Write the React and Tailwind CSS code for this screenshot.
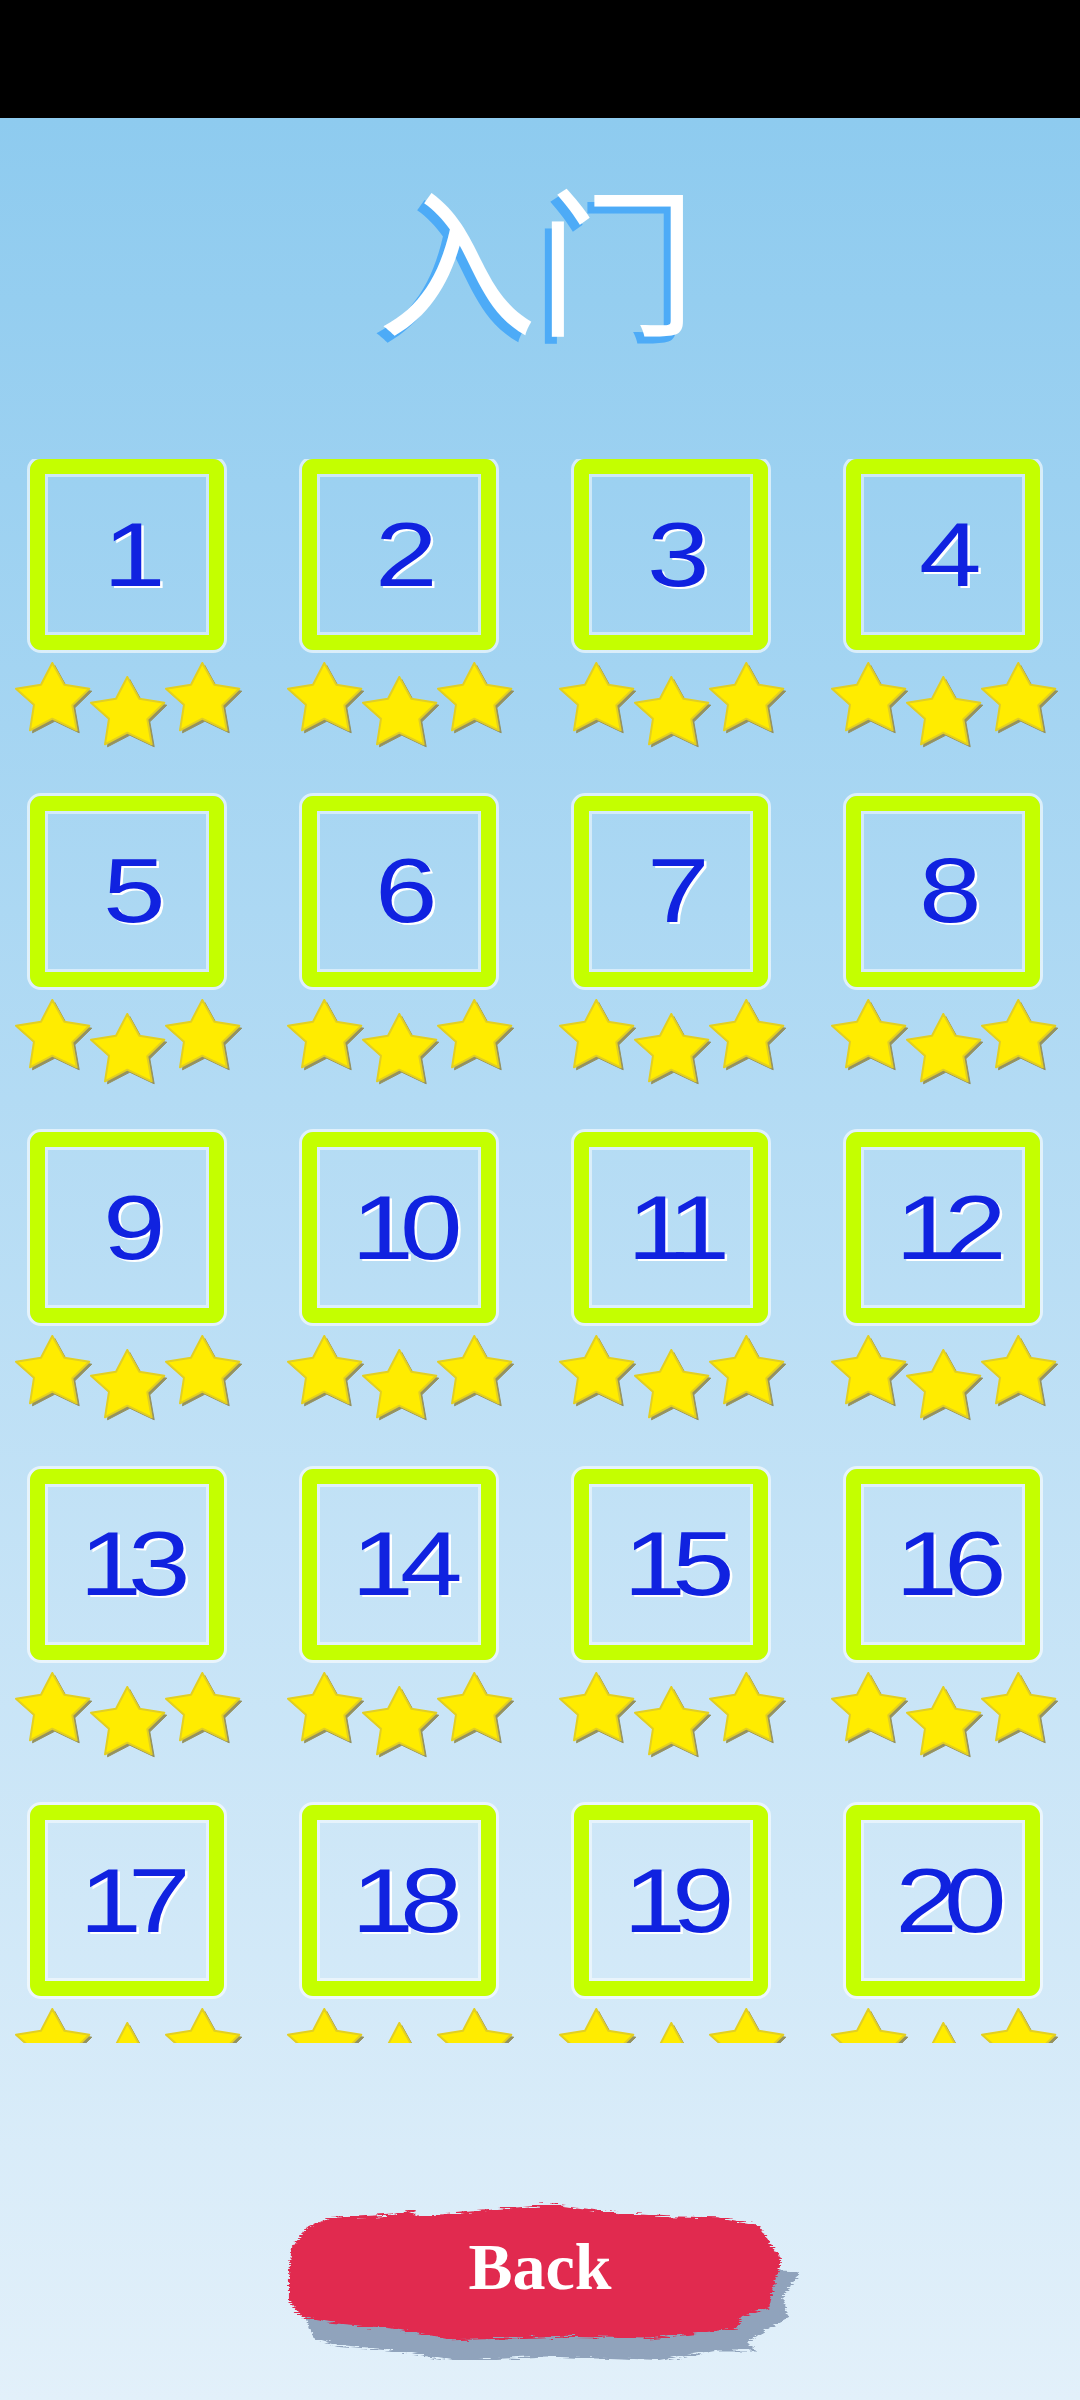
const levels = Array.from({ length: 20 }, (_, i) => i + 1);

function Star({ lower }) {
  const pts = "37.3,1 49.3,22.7 74.3,26.7 57.3,43.3 61.7,68.3 37.3,56.7 15,68.3 19,42.7 1,26.7 26,22.7";
  return (
    <svg viewBox="0 0 80 76" className={`w-[80px] h-[76px] shrink-0 -mx-[2.5px] ${lower ? "mt-[14px]" : ""}`}>
      <polygon points={pts} transform="translate(2.5 2.5)" fill="#95925f" stroke="#95925f" strokeWidth="1" />
      <polygon points={pts} fill="#ffec00" stroke="#e2cf22" strokeWidth="2" strokeLinejoin="round" />
    </svg>
  );
}

function Level({ n }) {
  return (
    <div className="w-[200px] h-[336.5px] flex flex-col">
      <div className="h-[197px] border-[3px] border-white/60 rounded-[14px]">
        <div className="h-full border-[15px] border-[#c4ff00] rounded-[11px]">
          <div className="h-full border-[3px] border-white/50 flex items-center justify-center pl-[2px]">
            <span
              className="inline-block scale-x-[1.25] text-[90px] leading-none tracking-[-11px] text-[#1022e0] [text-shadow:2px_2px_0_#ffffff]"
              style={{ fontFamily: '"Liberation Sans", Arial, sans-serif' }}
            >
              {n}
            </span>
          </div>
        </div>
      </div>
      <div className="flex justify-center mt-[9px] pl-[5px]">
        <Star />
        <Star lower />
        <Star />
      </div>
    </div>
  );
}

function Brush() {
  return (
    <svg viewBox="0 0 1568 522" className="absolute inset-0 w-full h-full">
      <defs>
        <filter id="rough" x="-5%" y="-10%" width="110%" height="120%">
          <feTurbulence type="fractalNoise" baseFrequency="0.02 0.22" numOctaves="3" seed="4" result="n" />
          <feDisplacementMap in="SourceGraphic" in2="n" scale="24" xChannelSelector="R" yChannelSelector="G" />
        </filter>
      </defs>
      <g filter="url(#rough)">
        <polygon
          fill="#90a3bc"
          points="105,400 125,460 200,482 400,500 550,525 800,512 1130,525 1300,495 1410,495 1385,470 1450,430 1505,400 1490,340 1540,265 1440,260 1360,300 1000,400"
        />
        <polygon
          fill="#e12a50"
          points="55,280 62,200 105,140 170,110 360,100 400,88 440,105 600,90 820,70 1000,95 1150,105 1300,108 1420,130 1450,180 1485,230 1460,320 1450,370 1370,395 1360,430 1100,460 850,455 530,465 350,430 180,415 95,400 55,350"
        />
      </g>
    </svg>
  );
}

export default function App() {
  return (
    <div className="w-[1080px] h-[2400px] flex flex-col overflow-hidden bg-[#000]">
      <div className="h-[118px] bg-black shrink-0" />
      <div className="flex-1 flex flex-col bg-gradient-to-b from-[#8ecbef] to-[#e2f0fa]">
        <div className="h-[341px] shrink-0 flex justify-center pt-[48px] pr-[6px]">
          <span
            className="text-[160px] leading-[1.1] text-white [text-shadow:-7px_7px_0_#4dabf7]"
            style={{ fontFamily: '"Noto Sans CJK SC", "Noto Sans", sans-serif' }}
          >
            入门
          </span>
        </div>
        <div className="h-[1584px] shrink-0 overflow-hidden">
          <div className="-mt-[3px] pl-[27px] grid grid-cols-[repeat(4,200px)] gap-x-[72px]">
            {levels.map((n) => (
              <Level key={n} n={n} />
            ))}
          </div>
        </div>
        <div className="mt-[137px] relative mx-auto w-[540px] h-[180px] flex items-center justify-center">
          <Brush />
          <span
            className="relative text-[66px] leading-none font-bold text-white -mt-[6px]"
            style={{ fontFamily: '"Liberation Serif", "Times New Roman", serif' }}
          >
            Back
          </span>
        </div>
      </div>
    </div>
  );
}
